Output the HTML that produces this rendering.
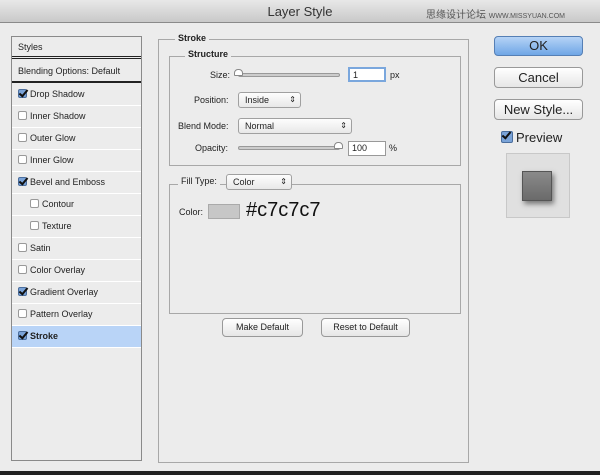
<!DOCTYPE html>
<html><head><style>
*{margin:0;padding:0;box-sizing:border-box}
body{width:600px;height:475px;background:#ececec;font-family:"Liberation Sans",sans-serif;font-size:9px;color:#222;position:relative;overflow:hidden}
.a{position:absolute}
.title{left:0;top:0;width:600px;height:23px;background:linear-gradient(#e8e8e8,#c9c9c9);border-bottom:1px solid #8a8a8a;text-align:center;font-size:13px;line-height:23px;color:#333}
.lp{left:11px;top:36px;width:131px;height:425px;border:1px solid #8a8a8a;background:#ececec}
.row{position:absolute;left:0;width:129px;height:22px;border-bottom:1px solid #fff;line-height:21px;padding-left:6px}
.cb{display:inline-block;width:9px;height:9px;border:1px solid #999;border-radius:2px;background:#fff;vertical-align:-1px;margin-right:3px;position:relative}
.cb.on{background:#7aa3d8;border-color:#4a6d9c}
.cb.on:after{content:"";position:absolute;left:2px;top:-2px;width:3px;height:7px;border:solid #111;border-width:0 2px 2px 0;transform:rotate(40deg)}
.grp{border:1px solid #a8a8a8}
.lbl{background:#ececec;font-weight:bold;padding:0 3px}
.sel{background:linear-gradient(#fdfdfd,#e8e8e8);border:1px solid #a0a0a0;border-radius:3px;padding-left:6px;line-height:14px;height:16px}
.sel:after{content:"⇕";position:absolute;right:4px;top:0;font-size:8px}
.slider{height:4px;border:1px solid #999;border-radius:2px;background:#ccc}
.inp{background:#fff;border:1px solid #999;height:15px;line-height:13px;padding-left:3px}
.btn{border:1px solid #999;border-radius:4px;background:linear-gradient(#fff,#e6e6e6);text-align:center}
</style></head><body>
<div class="a title">Layer Style</div>
<div class="a" style="left:426px;top:6px;font-size:10px;color:#555;font-family:'Liberation Sans','Noto Sans CJK SC',sans-serif">思缘设计论坛 <span style="font-size:7px">WWW.MISSYUAN.COM</span></div>
<div class="a lp">
<div class="row" style="top:0;height:22px;border-bottom:3px double #222">Styles</div>
<div class="row" style="top:24px;border-bottom:2px solid #222">Blending Options: Default</div>
<div class="row" style="top:47px"><span class="cb on"></span>Drop Shadow</div>
<div class="row" style="top:69px"><span class="cb"></span>Inner Shadow</div>
<div class="row" style="top:91px"><span class="cb"></span>Outer Glow</div>
<div class="row" style="top:113px"><span class="cb"></span>Inner Glow</div>
<div class="row" style="top:135px"><span class="cb on"></span>Bevel and Emboss</div>
<div class="row" style="top:157px;padding-left:18px"><span class="cb"></span>Contour</div>
<div class="row" style="top:179px;padding-left:18px"><span class="cb"></span>Texture</div>
<div class="row" style="top:201px"><span class="cb"></span>Satin</div>
<div class="row" style="top:223px"><span class="cb"></span>Color Overlay</div>
<div class="row" style="top:245px"><span class="cb on"></span>Gradient Overlay</div>
<div class="row" style="top:267px"><span class="cb"></span>Pattern Overlay</div>
<div class="row" style="top:289px;background:#b9d4f7;font-weight:bold"><span class="cb on"></span>Stroke</div>
</div>
<div class="a grp" style="left:158px;top:39px;width:311px;height:424px"></div>
<div class="a lbl" style="left:175px;top:33px">Stroke</div>
<div class="a grp" style="left:169px;top:56px;width:292px;height:110px"></div>
<div class="a lbl" style="left:185px;top:49px">Structure</div>
<div class="a" style="left:210px;top:70px">Size:</div>
<div class="a slider" style="left:238px;top:73px;width:102px"></div>
<div class="a" style="left:234px;top:69px;width:9px;height:7px;background:#fff;border:1px solid #888;border-radius:4px 4px 1px 1px"></div>
<div class="a inp" style="left:348px;top:67px;width:38px;border:2px solid #7aa7dd">1</div>
<div class="a" style="left:390px;top:70px">px</div>
<div class="a" style="left:194px;top:95px">Position:</div>
<div class="a sel" style="left:238px;top:92px;width:63px">Inside</div>
<div class="a" style="left:178px;top:121px">Blend Mode:</div>
<div class="a sel" style="left:238px;top:118px;width:114px">Normal</div>
<div class="a" style="left:195px;top:143px">Opacity:</div>
<div class="a slider" style="left:238px;top:146px;width:102px"></div>
<div class="a" style="left:334px;top:142px;width:9px;height:7px;background:#fff;border:1px solid #888;border-radius:4px 4px 1px 1px"></div>
<div class="a inp" style="left:348px;top:141px;width:38px">100</div>
<div class="a" style="left:389px;top:143px">%</div>
<div class="a grp" style="left:169px;top:184px;width:292px;height:130px"></div>
<div class="a" style="left:178px;top:176px;background:#ececec;padding:0 3px;font-size:9px">Fill Type:</div>
<div class="a sel" style="left:226px;top:174px;width:66px">Color</div>
<div class="a" style="left:179px;top:207px">Color:</div>
<div class="a" style="left:208px;top:204px;width:32px;height:15px;background:#c7c7c7;border:1px solid #aaa"></div>
<div class="a" style="left:246px;top:199px;font-size:20px;color:#111">#c7c7c7</div>
<div class="a btn" style="left:222px;top:318px;width:81px;height:19px;line-height:17px">Make Default</div>
<div class="a btn" style="left:321px;top:318px;width:89px;height:19px;line-height:17px">Reset to Default</div>
<div class="a btn" style="left:494px;top:36px;width:89px;height:20px;line-height:18px;font-size:13px;background:linear-gradient(#b6d3f6,#6fa6e6);border-color:#557fb5">OK</div>
<div class="a btn" style="left:494px;top:67px;width:89px;height:21px;line-height:19px;font-size:13px">Cancel</div>
<div class="a btn" style="left:494px;top:99px;width:89px;height:21px;line-height:19px;font-size:13px">New Style...</div>
<div class="a" style="left:501px;top:130px;font-size:13px"><span class="cb on" style="width:12px;height:12px"></span>Preview</div>
<div class="a" style="left:506px;top:153px;width:64px;height:65px;border:1px solid #c8c8c8;background:#e0e0e0"></div>
<div class="a" style="left:522px;top:171px;width:30px;height:30px;background:linear-gradient(#8a8a8a,#6a6a6a);border:1px solid #555;box-shadow:2px 3px 5px #777"></div>
<div class="a" style="left:0;top:471px;width:600px;height:4px;background:#222"></div>
</body></html>
